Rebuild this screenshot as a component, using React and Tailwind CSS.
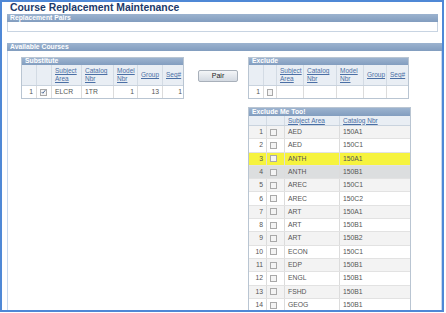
import React from "react";

const subCols = [
  { label: "", w: 15 },
  { label: "", w: 15 },
  { label: ["Subject", "Area"], w: 30 },
  { label: ["Catalog", "Nbr"], w: 32 },
  { label: ["Model", "Nbr"], w: 24 },
  { label: ["Group"], w: 25 },
  { label: ["Seq#"], w: 22 },
];

const exCols = [
  { label: "", w: 15 },
  { label: "", w: 13 },
  { label: ["Subject", "Area"], w: 27 },
  { label: ["Catalog", "Nbr"], w: 33 },
  { label: ["Model", "Nbr"], w: 27 },
  { label: ["Group"], w: 23 },
  { label: ["Seq#"], w: 22 },
];

const meToo = [
  ["AED", "150A1"],
  ["AED", "150C1"],
  ["ANTH", "150A1"],
  ["ANTH", "150B1"],
  ["AREC", "150C1"],
  ["AREC", "150C2"],
  ["ART", "150A1"],
  ["ART", "150B1"],
  ["ART", "150B2"],
  ["ECON", "150C1"],
  ["EDP", "150B1"],
  ["ENGL", "150B1"],
  ["FSHD", "150B1"],
  ["GEOG", "150B1"],
];

const Box = ({ checked }) => (
  <span className="inline-flex h-[7px] w-[7px] items-center justify-center border border-[#a9a9a9] bg-[#f4f4f4]">
    {checked && (
      <svg viewBox="0 0 8 8" className="h-[6px] w-[6px]">
        <path d="M1 4 L3 6 L7 1" fill="none" stroke="#3b5a8a" strokeWidth="1.4" />
      </svg>
    )}
  </span>
);

const Bar = ({ title, h = "h-[7px]" }) => (
  <div className={`${h} flex items-center bg-gradient-to-b from-[#9cb3cf] to-[#829dbf] pl-[3px] text-[6.8px] font-bold leading-none text-white`}>
    {title}
  </div>
);

const ColHead = ({ cols, h }) => (
  <div className={`flex ${h} bg-[#e9eef4] border-b border-[#c9d3de]`}>
    {cols.map((c, i) => (
      <div key={i} style={{ width: c.w }} className="flex shrink-0 flex-col justify-center border-r border-[#d3dbe4] pl-[3px] text-[6.5px] leading-[8px] text-[#4a6fa5] underline last:border-r-0">
        {c.label && c.label.map((l) => <span key={l}>{l}</span>)}
      </div>
    ))}
  </div>
);

const Cell = ({ w, right, children }) => (
  <div style={{ width: w }} className={`flex shrink-0 items-center border-r border-[#dcdcdc] px-[3px] text-[6.8px] text-[#555] last:border-r-0 ${right ? "justify-end" : ""}`}>
    {children}
  </div>
);

export default function App() {
  return (
    <div className="h-[313px] w-[446px] overflow-hidden bg-white font-['Liberation_Sans',Arial,sans-serif]">
      <div className="flex h-[312px] w-[444px] flex-col overflow-hidden border-2 border-[#4f88d6]">
        <div className="h-[13px] pl-[8px] text-[10.4px] font-bold leading-[12px] text-[#1c3a6b]">
          Course Replacement Maintenance
        </div>

        <div className="ml-[5px] mr-[4px]">
          <Bar title="Replacement Pairs" h="h-[8px]" />
          <div className="h-[10px] border border-t-0 border-[#c8d4e2]" />
        </div>

        <div className="ml-[5px] mt-[11px] flex flex-1 flex-col">
          <Bar title="Available Courses" h="h-[8px]" />
          <div className="flex flex-1 border-x border-[#c9d9ee] pl-[13px] pt-[6px]">
            <div className="w-[163px] self-start border border-[#b9c5d2]">
              <Bar title="Substitute" />
              <ColHead cols={subCols} h="h-[21px]" />
              <div className="flex h-[12px] bg-white">
                <Cell w={15} right>1</Cell>
                <Cell w={15}><Box checked /></Cell>
                <Cell w={30}>ELCR</Cell>
                <Cell w={32}>1TR</Cell>
                <Cell w={24} right>1</Cell>
                <Cell w={25} right>13</Cell>
                <Cell w={22} right>1</Cell>
              </div>
            </div>

            <div className="ml-[14px] mt-[13px] flex h-[12px] w-[40px] items-center justify-center self-start rounded-[2px] border border-[#a8b0ba] bg-gradient-to-b from-[#f4f6f8] to-[#d4dae2] text-[7px] text-[#222]">
              Pair
            </div>

            <div className="ml-[10px] flex flex-col gap-[8px]">
              <div className="w-[161px] border border-[#b9c5d2]">
                <Bar title="Exclude" />
                <ColHead cols={exCols} h="h-[21px]" />
                <div className="flex h-[12px] bg-white">
                  <Cell w={15} right>1</Cell>
                  <Cell w={13}><Box /></Cell>
                  <Cell w={27} />
                  <Cell w={33} />
                  <Cell w={27} />
                  <Cell w={23} />
                  <Cell w={22} />
                </div>
              </div>

              <div className="w-[163px] border border-[#b9c5d2]">
                <Bar title="Exclude Me Too!" h="h-[8px]" />
                <ColHead
                  cols={[
                    { label: "", w: 18 },
                    { label: "", w: 18 },
                    { label: ["Subject Area"], w: 55 },
                    { label: ["Catalog Nbr"], w: 70 },
                  ]}
                  h="h-[10px]"
                />
                {meToo.map(([s, c], i) => {
                  const bg = i === 2 ? "bg-[#f6f33e]" : i === 3 ? "bg-[#dcdedf]" : i % 2 === 0 ? "bg-[#f3f3f3]" : "bg-white";
                  return (
                    <div key={i} className={`flex h-[13.3px] border-b border-[#e2e2e2] ${bg}`}>
                      <Cell w={18} right>{i + 1}</Cell>
                      <Cell w={18}><Box /></Cell>
                      <Cell w={55}>{s}</Cell>
                      <Cell w={70}>{c}</Cell>
                    </div>
                  );
                })}
              </div>
            </div>
          </div>
        </div>
      </div>
    </div>
  );
}
